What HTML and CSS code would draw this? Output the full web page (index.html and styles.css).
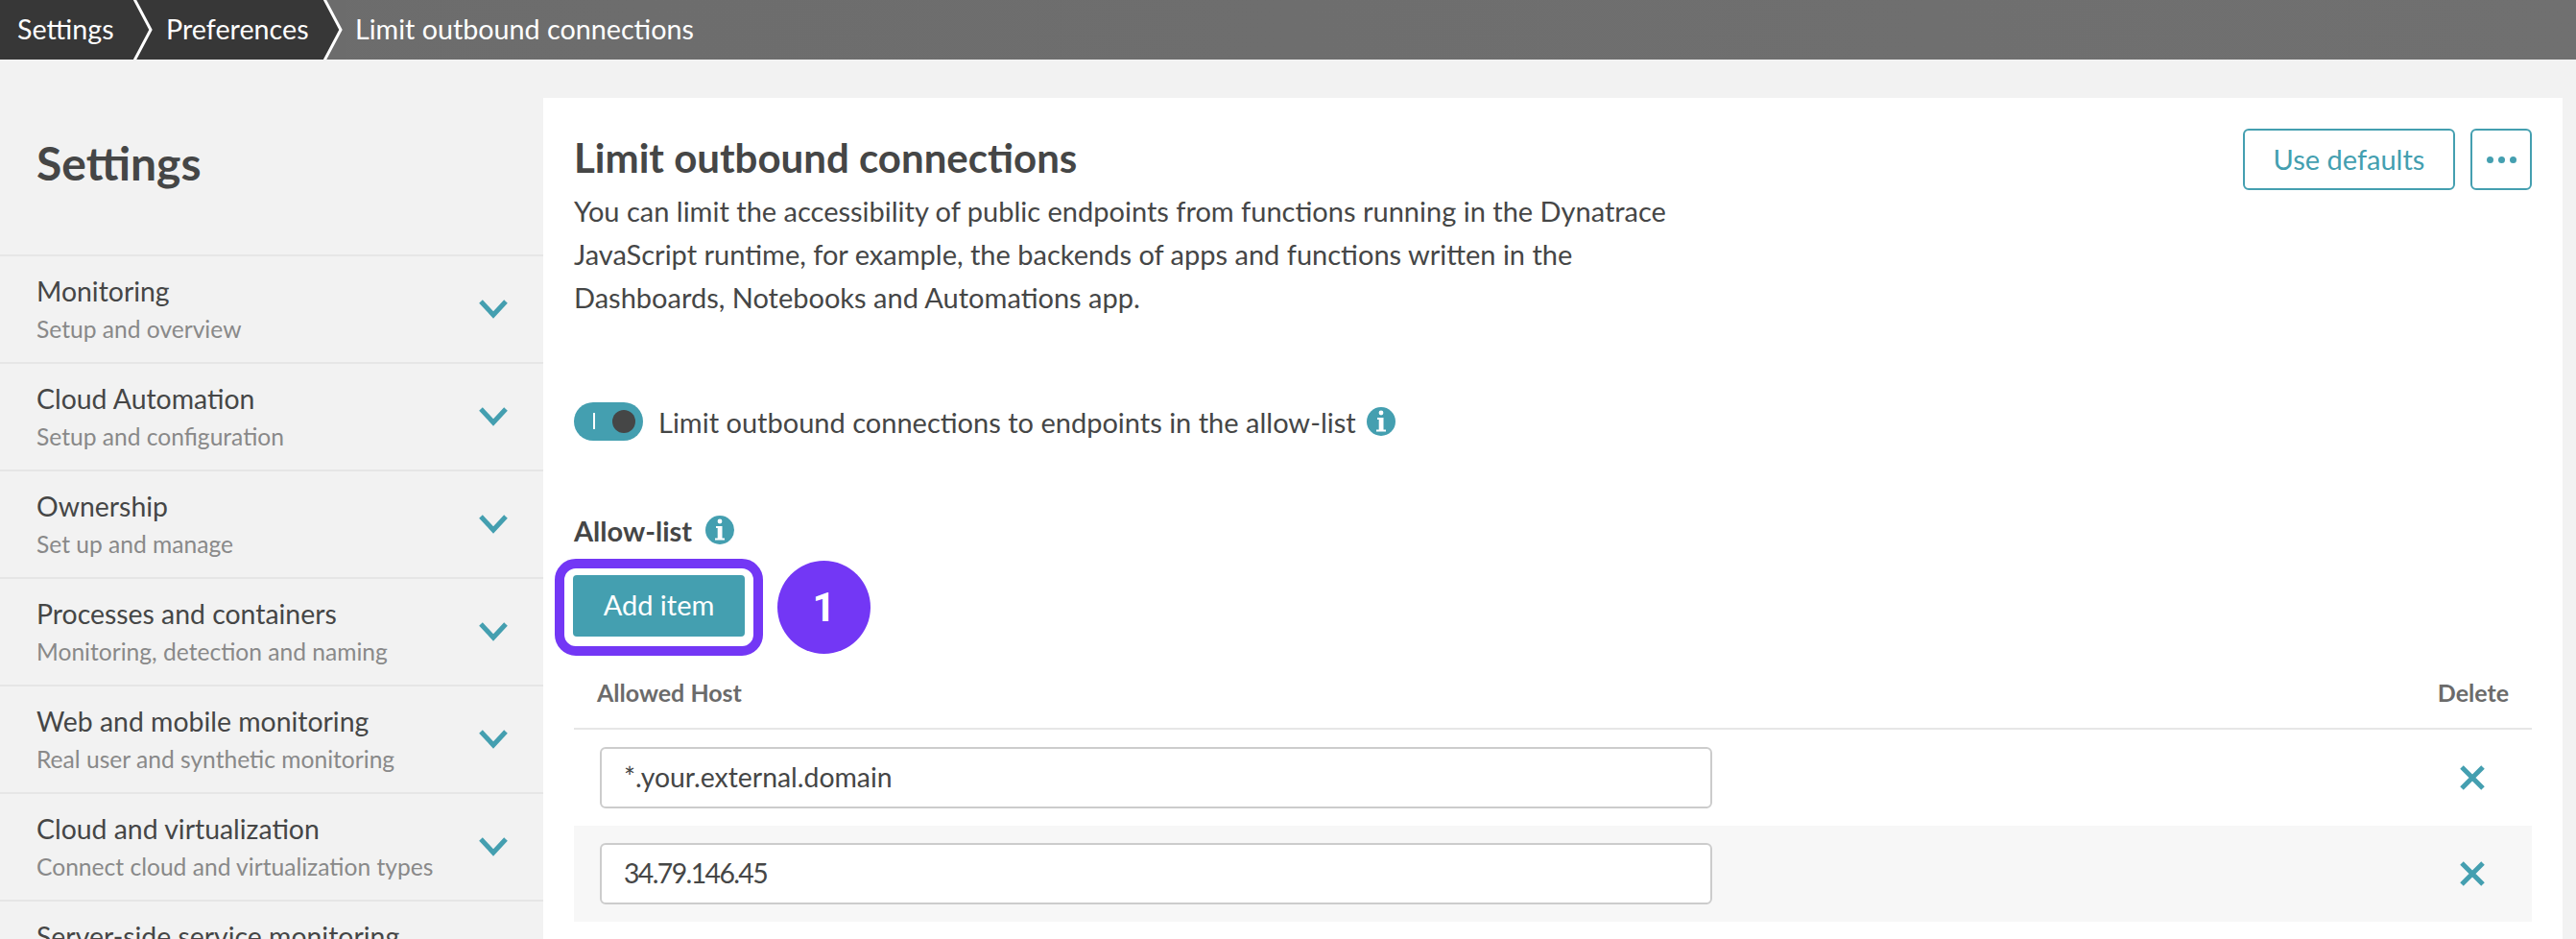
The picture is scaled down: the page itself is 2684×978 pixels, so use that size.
FILE: index.html
```html
<!DOCTYPE html>
<html lang="en">
<head>
    <meta charset="UTF-8">
    <title>Limit outbound connections</title>
    <link rel="stylesheet" href="styles.css">
</head>
<body>
    <nav class="crumbs">
        <a class="crumb crumb-first">Settings</a>
        <svg class="crumb-sep" viewBox="0 0 24 62"><rect width="24" height="62" fill="#373737"/><path d="M1 -1L18 31L1 63" fill="none" stroke="#fff" stroke-width="3"/></svg>
        <a class="crumb crumb-mid">Preferences</a>
        <svg class="crumb-sep" viewBox="0 0 24 62"><rect width="24" height="62" fill="#6c6c6c"/><path d="M0 0H1L18 31L1 62H0Z" fill="#373737"/><path d="M1 -1L18 31L1 63" fill="none" stroke="#fff" stroke-width="3"/></svg>
        <span class="crumb crumb-last">Limit outbound connections</span>
    </nav>

    <div class="layout">
        <aside class="sidebar">
            <h2 class="sidebar-title">Settings</h2>
            <ul class="menu">
                <li class="menu-item">
                    <div><div class="menu-name">Monitoring</div><div class="menu-sub">Setup and overview</div></div>
                    <svg class="chevron" viewBox="0 0 30 20"><path d="M2 2L15 16L28 2" /></svg>
                </li>
                <li class="menu-item">
                    <div><div class="menu-name">Cloud Automation</div><div class="menu-sub">Setup and configuration</div></div>
                    <svg class="chevron" viewBox="0 0 30 20"><path d="M2 2L15 16L28 2" /></svg>
                </li>
                <li class="menu-item">
                    <div><div class="menu-name">Ownership</div><div class="menu-sub">Set up and manage</div></div>
                    <svg class="chevron" viewBox="0 0 30 20"><path d="M2 2L15 16L28 2" /></svg>
                </li>
                <li class="menu-item">
                    <div><div class="menu-name">Processes and containers</div><div class="menu-sub">Monitoring, detection and naming</div></div>
                    <svg class="chevron" viewBox="0 0 30 20"><path d="M2 2L15 16L28 2" /></svg>
                </li>
                <li class="menu-item">
                    <div><div class="menu-name">Web and mobile monitoring</div><div class="menu-sub">Real user and synthetic monitoring</div></div>
                    <svg class="chevron" viewBox="0 0 30 20"><path d="M2 2L15 16L28 2" /></svg>
                </li>
                <li class="menu-item">
                    <div><div class="menu-name">Cloud and virtualization</div><div class="menu-sub">Connect cloud and virtualization types</div></div>
                    <svg class="chevron" viewBox="0 0 30 20"><path d="M2 2L15 16L28 2" /></svg>
                </li>
                <li class="menu-item">
                    <div><div class="menu-name">Server-side service monitoring</div></div>
                </li>
            </ul>
        </aside>

        <main class="card">
            <header class="card-head">
                <div>
                    <h1 class="card-title">Limit outbound connections</h1>
                    <p class="card-text">You can limit the accessibility of public endpoints from functions running in the Dynatrace<br>JavaScript runtime, for example, the backends of apps and functions written in the<br>Dashboards, Notebooks and Automations app.</p>
                </div>
                <div class="card-actions">
                    <button class="btn-outline btn-defaults">Use defaults</button>
                    <button class="btn-outline btn-more"><span class="dot"></span><span class="dot"></span><span class="dot"></span></button>
                </div>
            </header>

            <div class="toggle-row">
                <span class="toggle"><span class="toggle-mark"></span><span class="toggle-knob"></span></span>
                <span class="toggle-label">Limit outbound connections to endpoints in the allow-list</span>
                <svg class="info info-near" viewBox="0 0 30 30"><circle cx="15" cy="15" r="15"/><circle class="info-i" cx="15" cy="6" r="2.4"/><path class="info-i" d="M11 11H17.5V23.5H20V25.5H10V23.5H12.7V13H11Z"/></svg>
            </div>

            <div class="allow-title">
                <span>Allow-list</span>
                <svg class="info" viewBox="0 0 30 30"><circle cx="15" cy="15" r="15"/><circle class="info-i" cx="15" cy="6" r="2.4"/><path class="info-i" d="M11 11H17.5V23.5H20V25.5H10V23.5H12.7V13H11Z"/></svg>
            </div>

            <div class="add-row">
                <div class="highlight"><button class="btn-add">Add item</button></div>
                <div class="step">1</div>
            </div>

            <div class="table-head">
                <span>Allowed Host</span>
                <span>Delete</span>
            </div>
            <div class="table-row">
                <input class="host-input" type="text" value="*.your.external.domain">
                <svg class="del" viewBox="0 0 26 26"><path d="M2 2L24 24M24 2L2 24"/></svg>
            </div>
            <div class="table-row table-row-alt">
                <input class="host-input host-input-ip" type="text" value="34.79.146.45">
                <svg class="del" viewBox="0 0 26 26"><path d="M2 2L24 24M24 2L2 24"/></svg>
            </div>
        </main>
    </div>
</body>
</html>
```

FILE: styles.css
```css
html, body {
    margin: 0;
    padding: 0;
    height: 978px;
    overflow: hidden;
}

body {
    background-color: #f2f2f2;
    color: #454646;
    font-family: Lato, "Open Sans", sans-serif;
    font-size: 29px;
}

/* breadcrumbs */
.crumbs {
    display: flex;
    height: 62px;
    background: linear-gradient(90deg, #6c6c6c, #707070);
    color: #fff;
    font-size: 28.7px;
}

.crumb {
    display: flex;
    align-items: center;
    height: 62px;
    padding-bottom: 2px;
    box-sizing: border-box;
}

.crumb-first {
    width: 139px;
    padding-left: 18px;
    background-color: #373737;
}

.crumb-mid {
    width: 174px;
    padding-left: 10px;
    background-color: #373737;
}

.crumb-last {
    padding-left: 9px;
}

.crumb-sep {
    width: 24px;
    height: 62px;
    flex: none;
}

/* layout */
.layout {
    display: flex;
    padding: 40px 14px 0 0;
}

.sidebar {
    width: 566px;
    flex: none;
}

.sidebar-title {
    margin: 0;
    padding: 0 0 0 38px;
    height: 163px;
    line-height: 136px;
    font-size: 48px;
    font-weight: 700;
}

.menu {
    list-style: none;
    margin: 0;
    padding: 0;
}

.menu-item {
    display: flex;
    justify-content: space-between;
    align-items: flex-start;
    height: 112px;
    box-sizing: border-box;
    padding: 16px 37px 0 38px;
    border-top: 2px solid #e6e6e6;
}

.menu-name {
    font-size: 28.4px;
    line-height: 40px;
}

.menu-sub {
    margin-top: 2px;
    line-height: 36px;
    font-size: 24.6px;
    color: #898989;
}

.chevron {
    width: 30px;
    height: 20px;
    margin-top: 29px;
    fill: none;
    stroke: #449fb0;
    stroke-width: 5;
}

/* card */
.card {
    flex: 1;
    height: 876px;
    box-sizing: border-box;
    padding: 32px;
    background-color: #fff;
}

.card-head {
    display: flex;
    justify-content: space-between;
    align-items: flex-start;
}

.card-title {
    margin: 0;
    font-size: 42px;
    font-weight: 700;
    line-height: 60px;
}

.card-text {
    margin: 3px 0 0;
    line-height: 45px;
}

.card-actions {
    display: flex;
    gap: 16px;
}

.btn-outline {
    display: flex;
    align-items: center;
    justify-content: center;
    height: 64px;
    box-sizing: border-box;
    padding: 0;
    border: 2px solid #449fb0;
    border-radius: 6px;
    background-color: #fff;
    color: #449fb0;
    font-family: inherit;
    font-size: 29px;
}

.btn-defaults {
    width: 221px;
    padding-bottom: 2px;
}

.btn-more {
    width: 64px;
    gap: 5px;
}

.dot {
    width: 7px;
    height: 7px;
    border-radius: 50%;
    background-color: #449fb0;
}

.toggle-row {
    display: flex;
    align-items: center;
    margin-top: 87px;
    height: 40px;
}

.toggle {
    position: relative;
    width: 72px;
    height: 40px;
    border-radius: 20px;
    background-color: #449fb0;
}

.toggle-mark {
    position: absolute;
    left: 20px;
    top: 11px;
    width: 2px;
    height: 17px;
    background-color: #fff;
}

.toggle-knob {
    position: absolute;
    left: 40px;
    top: 8px;
    width: 24px;
    height: 24px;
    border-radius: 50%;
    background-color: #454646;
}

.toggle-label {
    margin-left: 16px;
}

.info {
    width: 30px;
    height: 30px;
    margin-left: 14px;
    fill: #449fb0;
}

.info-near {
    margin-left: 11px;
}

.info .info-i {
    fill: #fff;
}

.allow-title {
    display: flex;
    align-items: center;
    margin-top: 73px;
    height: 40px;
    font-weight: 700;
}

.add-row {
    display: flex;
    align-items: center;
    margin-top: 10px;
    margin-left: -20px;
}

.highlight {
    padding: 7px 9px 10px 9px;
    border: 10px solid #7337f5;
    border-radius: 22px;
    background-color: #fff;
}

.btn-add {
    display: block;
    width: 179px;
    height: 64px;
    padding: 0 0 3px;
    border: none;
    border-radius: 4px;
    background-color: #449fb0;
    color: #fff;
    font-family: inherit;
    font-size: 29px;
}

.step {
    width: 97px;
    height: 97px;
    margin-left: 15px;
    border-radius: 50%;
    background-color: #7337f5;
    color: #fff;
    font-family: Roboto, sans-serif;
    font-size: 42px;
    font-weight: 700;
    line-height: 97px;
    text-align: center;
}

.table-head {
    display: flex;
    justify-content: space-between;
    height: 77px;
    box-sizing: border-box;
    padding: 20px 24px 0;
    border-bottom: 2px solid #e6e6e6;
    color: #6b6b6b;
    font-size: 25px;
    font-weight: 700;
    line-height: 36px;
}

.table-row {
    display: flex;
    align-items: center;
    justify-content: space-between;
    height: 100px;
    padding: 0 49px 0 27px;
}

.table-row-alt {
    background-color: #f7f7f7;
}

.host-input {
    width: 1159px;
    height: 64px;
    box-sizing: border-box;
    padding: 0 23px 2px;
    border: 2px solid #ccc;
    border-radius: 6px;
    background-color: #fff;
    color: #454646;
    font-family: inherit;
    font-size: 28.4px;
}

.host-input-ip {
    letter-spacing: -1.6px;
}

.del {
    width: 26px;
    height: 26px;
    fill: none;
    stroke: #449fb0;
    stroke-width: 5;
}
```
